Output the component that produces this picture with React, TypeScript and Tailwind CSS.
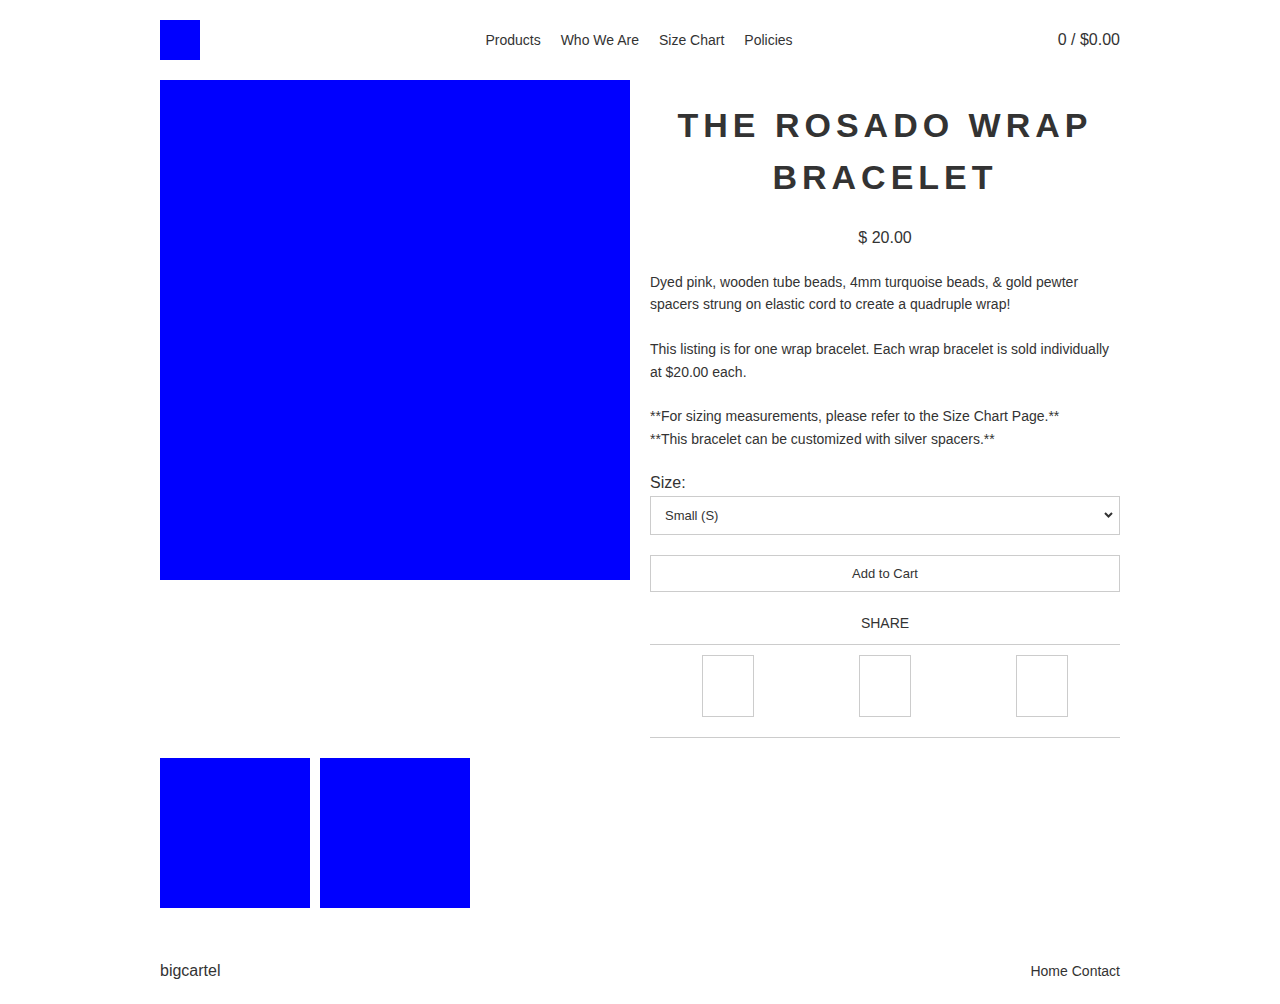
const navLinks = ["Products", "Who We Are", "Size Chart", "Policies"];

const Header = () => {
  return (
    <header className="grid grid-cols-[1fr_auto_1fr] items-center pt-5 pb-5">
      <a href="#" className="block w-10 h-10 bg-[#0000ff]" aria-label="Home" />
      <nav className="flex gap-5 -ml-[2px]">
        {navLinks.map((link) => (
          <a key={link} href="#" className="text-[14px] leading-5 text-[#333]">
            {link}
          </a>
        ))}
      </nav>
      <a href="#" className="justify-self-end text-[16px] leading-6 text-[#333]">
        0 / $0.00
      </a>
    </header>
  );
};

const ShareBox = () => <div className="w-[52px] h-[62px] border border-[#ccc]" />;

const ProductInfo = () => {
  return (
    <div className="w-[470px] text-[#333]">
      <h1 className="mt-[19px] text-center text-[34px] leading-[52px] font-bold tracking-[5px] uppercase">
        The Rosado Wrap Bracelet
      </h1>
      <p className="mt-[23px] text-center text-[16px] leading-6">$ 20.00</p>
      <div className="mt-[21px] text-[14px] leading-[22.4px]">
        <p>
          Dyed pink, wooden tube beads, 4mm turquoise beads, &amp; gold pewter spacers strung on elastic cord to
          create a quadruple wrap!
        </p>
        <br />
        <p>This listing is for one wrap bracelet. Each wrap bracelet is sold individually at $20.00 each.</p>
        <br />
        <p>
          **For sizing measurements, please refer to the Size Chart Page.**
          <br />
          **This bracelet can be customized with silver spacers.**
        </p>
      </div>
      <form className="mt-[21px]">
        <label className="block text-[16px] leading-6">Size:</label>
        <div className="relative mt-[1px]">
          <select className="block w-full h-[39px] appearance-none border border-[#ccc] bg-white pl-[14px] text-[13px] text-[#333] outline-none">
            <option>Small (S)</option>
            <option>Medium (M)</option>
            <option>Large (L)</option>
          </select>
          <svg
            className="absolute right-[7px] top-[16px] w-[9px] h-[6px] pointer-events-none"
            viewBox="0 0 9 6"
            fill="none"
            stroke="#333"
            strokeWidth="2"
          >
            <path d="M1 1l3.5 3.5L8 1" />
          </svg>
        </div>
        <button
          type="button"
          className="mt-5 block w-full h-[37px] border border-[#ccc] bg-white text-[13px] text-[#333]"
        >
          Add to Cart
        </button>
      </form>
      <div className="mt-5">
        <p className="text-center text-[14px] leading-5 pt-[1px] pb-[11px]">SHARE</p>
        <div className="grid grid-cols-3 border-t border-b border-[#ccc] pt-[10px] pb-5">
          <div className="flex justify-center">
            <ShareBox />
          </div>
          <div className="flex justify-center">
            <ShareBox />
          </div>
          <div className="flex justify-center">
            <ShareBox />
          </div>
        </div>
      </div>
    </div>
  );
};

export default function App() {
  return (
    <div className="min-h-screen bg-white font-['Liberation_Sans',Arial,sans-serif] text-[#333]">
      <div className="w-[960px] mx-auto">
        <Header />
        <main>
          <div className="flex gap-5 items-start">
            <div className="w-[470px] h-[500px] bg-[#0000ff]" />
            <ProductInfo />
          </div>
          <div className="flex gap-[10px] mt-5">
            <div className="w-[150px] h-[150px] bg-[#0000ff]" />
            <div className="w-[150px] h-[150px] bg-[#0000ff]" />
          </div>
        </main>
        <footer className="flex items-center justify-between mt-[51px] pb-5">
          <span className="text-[16px] leading-6">bigcartel</span>
          <nav className="flex gap-1 text-[14px] leading-5">
            <a href="#">Home</a>
            <a href="#">Contact</a>
          </nav>
        </footer>
      </div>
    </div>
  );
}
